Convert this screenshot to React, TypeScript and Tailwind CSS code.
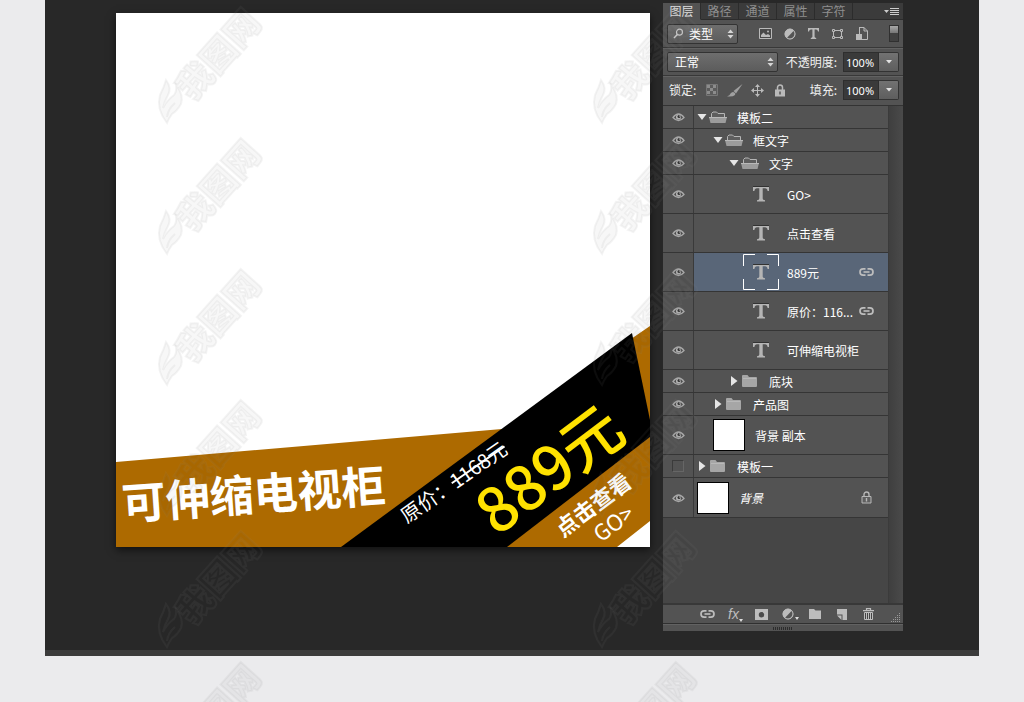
import { useState } from "react"
import type { ReactNode } from "react"

interface Layer {
  id: number
  name: string
  kind: "open" | "closed" | "text" | "image"
  pad: string
  height: string
  visible: boolean
  badge?: "link" | "lock"
  italic?: boolean
}

const layers: Layer[] = [
  { id: 1, name: "模板二", kind: "open", pad: "pl-[3px]", height: "h-[23px]", visible: true },
  { id: 2, name: "框文字", kind: "open", pad: "pl-[19px]", height: "h-[23px]", visible: true },
  { id: 3, name: "文字", kind: "open", pad: "pl-[35px]", height: "h-[23px]", visible: true },
  { id: 4, name: "GO>", kind: "text", pad: "pl-[49px]", height: "h-[39px]", visible: true },
  { id: 5, name: "点击查看", kind: "text", pad: "pl-[49px]", height: "h-[39px]", visible: true },
  { id: 6, name: "889元", kind: "text", pad: "pl-[49px]", height: "h-[39px]", visible: true, badge: "link" },
  { id: 7, name: "原价：116...", kind: "text", pad: "pl-[49px]", height: "h-[39px]", visible: true, badge: "link" },
  { id: 8, name: "可伸缩电视柜", kind: "text", pad: "pl-[49px]", height: "h-[39px]", visible: true },
  { id: 9, name: "底块", kind: "closed", pad: "pl-[35px]", height: "h-[23px]", visible: true },
  { id: 10, name: "产品图", kind: "closed", pad: "pl-[19px]", height: "h-[23px]", visible: true },
  { id: 11, name: "背景 副本", kind: "image", pad: "pl-[19px]", height: "h-[39px]", visible: true },
  { id: 12, name: "模板一", kind: "closed", pad: "pl-[3px]", height: "h-[23px]", visible: false },
  { id: 13, name: "背景", kind: "image", pad: "pl-[3px]", height: "h-10", visible: true, badge: "lock", italic: true },
]

const tabs = ["图层", "路径", "通道", "属性", "字符"]

function Icon({ w, h, children }: { w: number; h: number; children: ReactNode }) {
  return (
    <svg width={w} height={h} viewBox={`0 0 ${w} ${h}`} className="block shrink-0" aria-hidden="true">
      {children}
    </svg>
  )
}

function EyeIcon() {
  return (
    <Icon w={13} h={10}>
      <path d="M1 5.5Q6.5-1.5 12 5.5Q6.5 11.5 1 5.5Z" fill="#484848" stroke="#a8a8a8" strokeWidth="1.3" />
      <circle cx="6.5" cy="5" r="2.6" fill="#b0b0b0" />
      <circle cx="7" cy="4.6" r="1.5" fill="#333333" />
      <circle cx="7.8" cy="4" r="0.6" fill="#dddddd" />
    </Icon>
  )
}

function FolderOpenIcon() {
  return (
    <Icon w={18} h={13}>
      <path d="M2.5 6V2.5L4 1H7.5L9 2.5H15.5V6" fill="#5e5e5e" stroke="#b5b5b5" />
      <path d="M0 6H18L16.5 12H1.5Z" fill="#9c9c9c" />
      <path d="M0 6.5H18" stroke="#b9b9b9" />
    </Icon>
  )
}

function FolderIcon() {
  return (
    <Icon w={15} h={12}>
      <path d="M0 1Q0 0 1 0H5.5L7 2H14Q15 2 15 3V11Q15 12 14 12H1Q0 12 0 11Z" fill="#a6a6a6" />
      <path d="M1 3.5H14" stroke="#b8b8b8" />
    </Icon>
  )
}

function TypeIcon() {
  return (
    <Icon w={16} h={16}>
      <path d="M0 0.5H16V5H14.6Q14.3 2.2 12 2.2H9.7V12.5Q9.7 14 12 14.2V15.5H4V14.2Q6.3 14 6.3 12.5V2.2H4Q1.7 2.2 1.4 5H0Z" fill="#b5b5b5" />
      <path d="M0 .5H16" stroke="#333333" />
    </Icon>
  )
}

function LinkIcon() {
  return (
    <Icon w={15} h={10}>
      <path d="M6.5 1.8H4.2A3.2 3.2 0 0 0 4.2 8.2H6.5M8.5 1.8H10.8A3.2 3.2 0 0 1 10.8 8.2H8.5" fill="none" stroke="#bdbdbd" strokeWidth="1.7" />
      <path d="M4.5 5H10.5" stroke="#bdbdbd" strokeWidth="1.6" />
    </Icon>
  )
}

function LockIcon() {
  return (
    <Icon w={11} h={13}>
      <path d="M3 6V3.5A2.5 2.5 0 0 1 8 3.5V6" fill="none" stroke="#b8b8b8" strokeWidth="1.4" />
      <path d="M1 5.5H10V12H1Z" fill="#606060" stroke="#b8b8b8" />
      <path d="M5.5 7V10.5" stroke="#b8b8b8" strokeWidth="1.4" />
    </Icon>
  )
}

function HalfCircleIcon() {
  return (
    <Icon w={12} h={12}>
      <circle cx="6" cy="6" r="5.3" fill="#bcbcbc" />
      <path d="M10 2.6A5.3 5.3 0 0 1 2.8 10Z" fill="#555555" />
      <circle cx="6" cy="6" r="5" fill="none" stroke="#bcbcbc" />
    </Icon>
  )
}

function SpinArrows() {
  return (
    <Icon w={7} h={10}>
      <path d="M0.5 4L3.5 0.5L6.5 4ZM0.5 6L3.5 9.5L6.5 6Z" fill="#d6d6d6" />
    </Icon>
  )
}

function PercentField({ id, label }: { id: string; label: string }) {
  return (
    <div className="ml-auto flex items-center">
      <label htmlFor={id} className="mr-[6px] whitespace-nowrap">
        {label}
      </label>
      <input
        id={id}
        defaultValue="100%"
        className="h-5 w-9 border border-[#2e2e2e] bg-[#3a3a3a] pl-[2px] font-['Noto_Sans'] text-[11px] text-white outline-none"
      />
      <button
        type="button"
        aria-label={`${label}菜单`}
        className="flex h-5 w-5 items-center justify-center rounded-r-xs border border-l-0 border-[#333333] bg-linear-to-b from-[#727272] to-[#5e5e5e]"
      >
        <Icon w={6} h={4}>
          <path d="M0 0H6L3 3.5Z" fill="#e2e2e2" />
        </Icon>
      </button>
    </div>
  )
}

function Artwork() {
  return (
    <svg
      viewBox="0 0 534 534"
      className="block h-auto w-full bg-white font-['Noto_Sans_CJK_SC',sans-serif] shadow-[0_3px_8px_rgba(0,0,0,0.6)]"
    >
      <polygon points="0,449 386,416 400,420 515,326 534,313 534,508 501,534 0,534" fill="#ad6a00" />
      <polygon points="516,320 534,407 534,424 391,534 225,534" fill="#000000" />
      <text transform="translate(7 507) rotate(-4)" fontSize="44" fontWeight="700" fill="#ffffff">
        可伸缩电视柜
      </text>
      <text transform="translate(291 511) rotate(-35)" fontSize="20" fontWeight="400" fill="#ffffff">
        原价：<tspan textDecoration="line-through">1168元</tspan>
      </text>
      <text transform="translate(381 524) rotate(-37)" fontSize="61" fontWeight="500" fill="#ffe200">
        889元
      </text>
      <text transform="translate(447 525) rotate(-37)" fontSize="22" fontWeight="700" fill="#ffffff">
        点击查看
      </text>
      <text transform="translate(485 530) rotate(-37)" fontSize="22" fontWeight="400" fill="#ffffff">
        GO&gt;
      </text>
    </svg>
  )
}

function LayerThumb({ layer, selected }: { layer: Layer; selected: boolean }) {
  if (layer.kind === "open") {
    return (
      <span className="flex items-center gap-[2px]">
        <Icon w={10} h={6}>
          <path d="M0.5 0H9.5L5 6Z" fill="#e6e6e6" />
        </Icon>
        <FolderOpenIcon />
      </span>
    )
  }
  if (layer.kind === "closed") {
    return (
      <span className="flex w-[30px] items-center gap-[4px] pl-[2px]">
        <Icon w={7} h={10}>
          <path d="M0 0L6.5 5L0 10Z" fill="#e6e6e6" />
        </Icon>
        <FolderIcon />
      </span>
    )
  }
  if (layer.kind === "image") {
    return <span className="h-8 w-8 border border-black bg-white" />
  }
  return (
    <span className="relative flex h-9 w-9 items-center justify-center">
      <TypeIcon />
      {selected && (
        <svg viewBox="0 0 36 36" className="absolute inset-0 h-9 w-9" aria-hidden="true">
          <path d="M12 .5H.5V12M24 .5H35.5V12M.5 25V35.5H12M35.5 25V35.5H24" fill="none" stroke="#ffffff" />
        </svg>
      )}
    </span>
  )
}

function LayersPanel() {
  const [selected, setSelected] = useState(6)
  const [hidden, setHidden] = useState<number[]>(layers.filter((l) => !l.visible).map((l) => l.id))

  const toggle = (id: number) => {
    setHidden(hidden.includes(id) ? hidden.filter((h) => h !== id) : [...hidden, id])
  }

  return (
    <aside className="mt-[3px] w-60 shrink-0 bg-[#535353] font-['Noto_Sans_CJK_SC',sans-serif] text-xs leading-4 text-[#f0f0f0]">
      <div className="flex h-[17px] bg-[#3b3b3b]">
        {tabs.map((tab, i) => (
          <button
            key={tab}
            type="button"
            className={
              i === 0
                ? "w-[38px] border-r border-b border-r-[#2c2c2c] border-b-[#535353] bg-[#535353] text-[#dedede]"
                : "w-[38px] border-r border-b border-[#2c2c2c] text-[#8f8f8f]"
            }
          >
            {tab}
          </button>
        ))}
        <button type="button" aria-label="面板菜单" className="flex flex-1 items-center justify-end border-b border-[#2c2c2c] pr-1">
          <Icon w={15} h={9}>
            <path d="M0 3H5L2.5 6Z" fill="#cccccc" />
            <path d="M6 1.5H15M6 3.5H15M6 5.5H15M6 7.5H15" stroke="#cccccc" />
          </Icon>
        </button>
      </div>

      <div className="flex h-7 items-center border-b border-[#383838] px-1">
        <div className="relative">
          <select
            aria-label="筛选"
            className="h-5 w-[71px] appearance-none rounded-xs border border-[#333333] bg-linear-to-b from-[#6e6e6e] to-[#5c5c5c] pl-[21px] text-white"
          >
            <option>类型</option>
          </select>
          <span className="pointer-events-none absolute inset-0 flex items-center justify-between pr-[4px] pl-[6px]">
            <Icon w={11} h={11}>
              <circle cx="6.5" cy="4.2" r="3" fill="none" stroke="#cccccc" strokeWidth="1.2" />
              <path d="M4.3 6.5L1 10" stroke="#cccccc" strokeWidth="1.5" />
            </Icon>
            <SpinArrows />
          </span>
        </div>
        <div className="ml-[21px] flex items-center gap-3">
          <button type="button" aria-label="像素图层">
            <Icon w={13} h={11}>
              <path d="M.5 .5H12.5V10.5H.5Z" fill="#4a4a4a" stroke="#bababa" />
              <path d="M2 9V7L4.5 4.5L7 7L9 6L11 7.5V9Z" fill="#bababa" />
              <circle cx="9" cy="3.5" r="1" fill="#bababa" />
            </Icon>
          </button>
          <button type="button" aria-label="调整图层">
            <HalfCircleIcon />
          </button>
          <button type="button" aria-label="文字图层">
            <Icon w={11} h={11}>
              <path d="M0 0H11V3.5H10Q9.7 1.5 8 1.5H6.6V8.8Q6.6 9.8 8.2 10V11H2.8V10Q4.4 9.8 4.4 8.8V1.5H3Q1.3 1.5 1 3.5H0Z" fill="#bababa" />
            </Icon>
          </button>
          <button type="button" aria-label="形状图层">
            <Icon w={13} h={12}>
              <path d="M3 2.5H10M3 9.5H10M2.5 3V9M10.5 3V9" stroke="#bababa" />
              <path d="M1.5 1.5H3.5V3.5H1.5ZM9.5 1.5H11.5V3.5H9.5ZM1.5 8.5H3.5V10.5H1.5ZM9.5 8.5H11.5V10.5H9.5Z" fill="#555555" stroke="#bababa" />
            </Icon>
          </button>
          <button type="button" aria-label="智能对象">
            <Icon w={12} h={13}>
              <path d="M4 .5H8L11.5 4V12.5H6" fill="none" stroke="#bababa" />
              <path d="M3.5 0V7M8 .5V4H11.5" fill="none" stroke="#bababa" />
              <path d="M0 7H6V13H0Z" fill="#bababa" />
            </Icon>
          </button>
        </div>
        <button type="button" aria-label="启用筛选" className="ml-auto h-[17px] w-[10px] border border-[#303030] bg-[#414141]">
          <span className="mb-2 block h-[7px] bg-linear-to-b from-[#a8a8a8] to-[#777777]" />
        </button>
      </div>

      <div className="flex h-7 items-center border-t border-b border-t-[#626262] border-b-[#383838] px-1">
        <div className="relative">
          <select
            aria-label="混合模式"
            className="h-5 w-[111px] appearance-none rounded-xs border border-[#333333] bg-linear-to-b from-[#6e6e6e] to-[#5c5c5c] pl-[7px] text-white"
          >
            <option>正常</option>
          </select>
          <span className="pointer-events-none absolute inset-0 flex items-center justify-end pr-[4px]">
            <SpinArrows />
          </span>
        </div>
        <PercentField id="opacity" label="不透明度:" />
      </div>

      <div className="flex h-[29px] items-center border-t border-[#626262] pr-1 pb-[2px] pl-[6px]">
        <span>锁定:</span>
        <div className="ml-[10px] flex items-center gap-[8px]">
          <button type="button" aria-label="锁定透明像素">
            <Icon w={12} h={12}>
              <path d="M.5 .5H11.5V11.5H.5Z" fill="#5c5c5c" stroke="#777777" />
              <path d="M1 1H4V4H1ZM7 1H10V4H7ZM4 4H7V7H4ZM1 7H4V10H1ZM7 7H10V10H7Z" fill="#8c8c8c" />
            </Icon>
          </button>
          <button type="button" aria-label="锁定图像像素" className="ml-px">
            <Icon w={16} h={13}>
              <path d="M15.5 0L6.5 7L9 9.5Z" fill="#a0a0a0" />
              <path d="M6 8Q9 9 8 11Q6 13 0 12.5Q3 11.5 3.5 9.5Q4.5 8 6 8Z" fill="#a0a0a0" />
            </Icon>
          </button>
          <button type="button" aria-label="锁定位置">
            <Icon w={13} h={13}>
              <path d="M6.5 1V12M1 6.5H12" stroke="#bababa" />
              <path d="M6.5 0L9 3H4ZM6.5 13L9 10H4ZM0 6.5L3 4V9ZM13 6.5L10 4V9Z" fill="#bababa" />
            </Icon>
          </button>
          <button type="button" aria-label="全部锁定" className="pl-[3px]">
            <Icon w={10} h={13}>
              <path d="M2.5 6V3.5A2.5 2.5 0 0 1 7.5 3.5V6" fill="none" stroke="#bababa" strokeWidth="1.5" />
              <path d="M0 5.5H10V12.5H0Z" fill="#bababa" />
              <path d="M5 7.5V10.5" stroke="#555555" strokeWidth="1.5" />
            </Icon>
          </button>
        </div>
        <PercentField id="fill" label="填充:" />
      </div>

      <div className="flex border-t border-[#333333] bg-[#464646]">
        <ul className="flex-1 pb-[85px]">
          {layers.map((layer) => {
            const active = layer.id === selected
            return (
              <li key={layer.id} className={`flex border-b border-[#353535] bg-[#535353] ${layer.height}`}>
                <button
                  type="button"
                  aria-label={`显示 ${layer.name}`}
                  onClick={() => toggle(layer.id)}
                  className="flex w-[31px] shrink-0 items-center justify-center border-r border-[#3a3a3a]"
                >
                  {hidden.includes(layer.id) ? (
                    <span className="h-3 w-3 border border-[#3b3b3b] border-r-[#666666] border-b-[#666666]" />
                  ) : (
                    <EyeIcon />
                  )}
                </button>
                <button
                  type="button"
                  onClick={() => setSelected(layer.id)}
                  className={`flex flex-1 items-center pr-[14px] text-left ${layer.pad} ${active ? "bg-[#596678]" : ""}`}
                >
                  <LayerThumb layer={layer} selected={active} />
                  <span
                    className={`pt-px whitespace-nowrap text-white ${layer.kind === "text" ? "ml-2" : "ml-[10px]"} ${layer.italic ? "italic" : ""}`}
                  >
                    {layer.name}
                  </span>
                  {layer.badge && (
                    <span className="ml-auto flex w-[15px] justify-center">
                      {layer.badge === "link" ? <LinkIcon /> : <LockIcon />}
                    </span>
                  )}
                </button>
              </li>
            )
          })}
        </ul>
        <div className="w-[15px] border-l border-[#3b3b3b] bg-linear-to-r from-[#3f3f3f] to-[#4a4a4a]" />
      </div>

      <div className="flex h-[21px] items-center border-t-2 border-b border-t-[#383838] border-b-[#303030] pl-[37px]">
        <div className="flex items-center">
          <button type="button" aria-label="链接图层" className="flex w-[15px] justify-center">
            <LinkIcon />
          </button>
          <button type="button" aria-label="图层样式" className="ml-[13px] flex w-[18px] items-end">
            <span className="font-['Liberation_Sans'] text-sm leading-4 text-[#bdbdbd] italic">fx</span>
            <Icon w={4} h={4}>
              <path d="M0 1H4L2 4Z" fill="#dddddd" />
            </Icon>
          </button>
          <button type="button" aria-label="图层蒙版" className="ml-[9px]">
            <Icon w={13} h={11}>
              <path d="M0 0H13V11H0Z" fill="#bdbdbd" />
              <circle cx="6.5" cy="5.8" r="2.7" fill="#4a4a4a" />
            </Icon>
          </button>
          <button type="button" aria-label="调整" className="ml-[14px] flex w-[17px] items-end gap-px">
            <HalfCircleIcon />
            <Icon w={4} h={4}>
              <path d="M0 1H4L2 4Z" fill="#dddddd" />
            </Icon>
          </button>
          <button type="button" aria-label="新建组" className="ml-[10px]">
            <Icon w={12} h={10}>
              <path d="M0 0H5L6.5 1.5H12V10H0Z" fill="#bdbdbd" />
            </Icon>
          </button>
          <button type="button" aria-label="新建图层" className="ml-[16px]">
            <Icon w={10} h={11}>
              <path d="M0 0H10V11H5.5V5.5H0Z" fill="#bdbdbd" />
              <path d="M0 6.5H4.5V11Z" fill="#bdbdbd" />
            </Icon>
          </button>
          <button type="button" aria-label="删除图层" className="ml-[16px]">
            <Icon w={11} h={12}>
              <path d="M3.5 2V.7H7.5V2M0 2.7H11" fill="none" stroke="#bdbdbd" strokeWidth="1.2" />
              <path d="M1.5 4.5H9.5V11.5H1.5Z" fill="#444444" stroke="#bdbdbd" />
              <path d="M3.5 4V11M5.5 4V11M7.5 4V11" stroke="#bdbdbd" />
            </Icon>
          </button>
        </div>
        <span className="mr-[2px] ml-auto self-end">
          <Icon w={10} h={10}>
            <path
              d="M8.5 0V1M8.5 2V3M8.5 4V5M8.5 6V7M8.5 8V9M6.5 2V3M6.5 4V5M6.5 6V7M6.5 8V9M4.5 4V5M4.5 6V7M4.5 8V9M2.5 6V7M2.5 8V9M.5 8V9"
              stroke="#999999"
            />
          </Icon>
        </span>
      </div>
      <div className="flex h-[7px] items-center justify-center border-t border-[#626262]">
        <Icon w={20} h={3}>
          <path d="M0 1.5H20" stroke="#2c2c2c" strokeWidth="3" strokeDasharray="1 1" />
        </Icon>
      </div>
    </aside>
  )
}

function Watermark() {
  return (
    <svg className="pointer-events-none absolute inset-0 h-full w-full font-['Noto_Sans_CJK_SC',sans-serif]" aria-hidden="true">
      <defs>
        <pattern id="mark" x="150" y="0" width="435" height="131" patternUnits="userSpaceOnUse">
          <g fill="#000000" fillOpacity="0.03" stroke="#808080" strokeOpacity="0.09" strokeWidth="2">
            <path d="M17 123Q6 109 10 95Q14 87 16 80Q22 88 18 95Q14 102 13 108Q17 100 24 95Q27 91 26 85Q34 95 31 104Q27 111 22 114Q19 118 17 123Z" />
            <path d="M17 117Q18 109 25 103" fill="none" />
            <text transform="translate(43 102) rotate(-48)" fontSize="35" fontWeight="900">
              我图网
            </text>
          </g>
        </pattern>
      </defs>
      <rect width="100%" height="100%" fill="url(#mark)" />
    </svg>
  )
}

export default function App() {
  return (
    <div className="relative min-h-screen overflow-hidden bg-[#ebebed] px-[45px]">
      <main className="flex items-start gap-[13px] border-b-6 border-[#3b3b3b] bg-[#282828] pr-[76px] pb-[19px] pl-[71px]">
        <div className="min-w-0 flex-1 pt-[13px]">
          <Artwork />
        </div>
        <LayersPanel />
      </main>
      <Watermark />
    </div>
  )
}
